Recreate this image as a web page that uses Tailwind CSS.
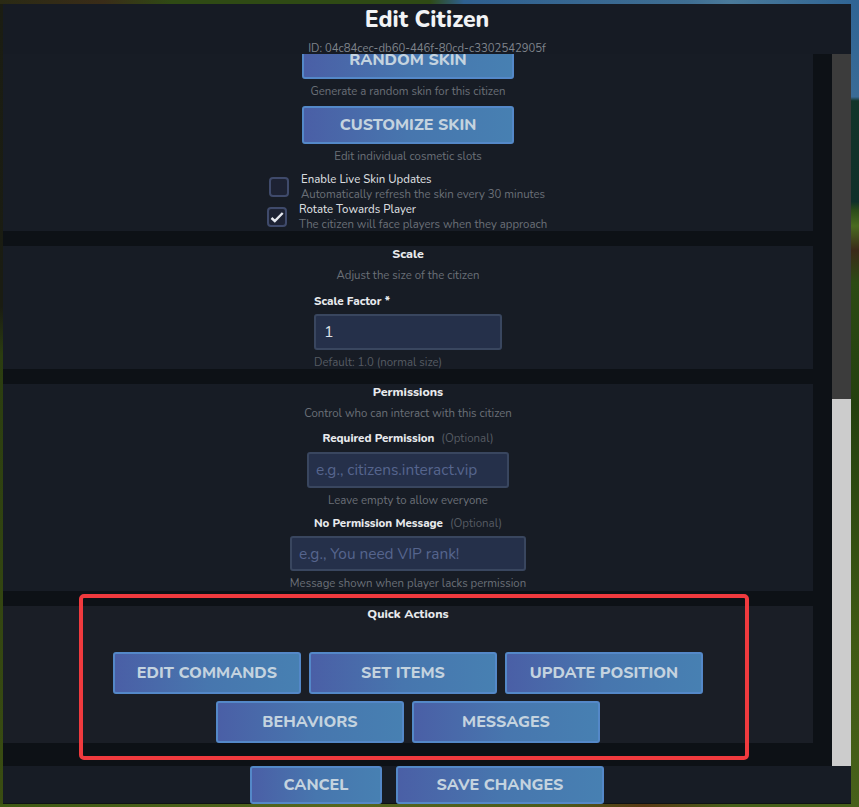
<!DOCTYPE html>
<html>
<head>
<meta charset="utf-8">
<script src="https://cdn.jsdelivr.net/npm/@tailwindcss/browser@4"></script>
</head>
<body class="m-0 overflow-hidden">
<div class="relative w-[859px] h-[807px] overflow-hidden pt-[4px] pl-[3px] font-['Nunito','Noto_Sans',sans-serif] bg-[linear-gradient(180deg,#1b1d12_0%,#1a1c12_38%,#2b3d10_44%,#3a4d12_100%)]">
  <!-- game scene behind the window -->
  <div class="absolute left-0 top-0 w-full h-[4px] bg-[linear-gradient(90deg,#2a2a14_0%,#3a2c18_12%,#2f4a14_20%,#2f4a14_50%,#2f6090_54%,#3f6e92_80%,#4a7a9a_85%,#2f6494_100%)]"></div>
  <div class="absolute right-0 top-0 w-[8px] h-full bg-[linear-gradient(180deg,#2f6494_0%,#3a6b96_12%,#12352a_12.5%,#10302a_25%,#2a4a1a_26%,#4a6a20_28%,#3a2a18_31%,#2c4a14_35%,#24400f_50%,#3f5a14_80%,#47601a_100%)]"></div>
  <div class="absolute left-0 bottom-0 w-full h-[3px] bg-[linear-gradient(90deg,#3f5a14_0%,#55661e_40%,#4a5a1a_65%,#5a3a14_75%,#47601a_85%,#47601a_100%)]"></div>

  <div class="relative w-[848px] h-[800px] flex flex-col bg-[#0d1116]">
    <!-- header -->
    <div class="h-[50px] shrink-0 bg-[#161b24] flex flex-col items-center">
      <h1 class="text-[23px] leading-[30px] font-extrabold text-[#f1f3f5] mt-[1px]">Edit Citizen</h1>
      <p class="text-[11.3px] leading-[16px] text-[#7f848c] mt-[6px]">ID: 04c84cec-db60-446f-80cd-c3302542905f</p>
    </div>
    <!-- body -->
    <div class="h-[713px] shrink-0 flex overflow-hidden">
      <div class="w-[810px] shrink-0 flex flex-col gap-[15px] mt-[-13px]">
        <section class="h-[190px] shrink-0 bg-[#171c25] flex flex-col items-center">
          <button class="w-[212px] h-[38px] shrink-0 rounded-[3px] border-2 border-[#5488c8] bg-gradient-to-r from-[#4a5fa6] via-[#4776ae] via-50% to-[#4780b2] text-[16.1px] font-extrabold text-[#c4d3df]">RANDOM SKIN</button>
          <p class="text-[11.4px] leading-[16px] text-[#6b7078] mt-[4px]">Generate a random skin for this citizen</p>
          <button class="w-[212px] h-[38px] shrink-0 rounded-[3px] border-2 border-[#5488c8] bg-gradient-to-r from-[#4a5fa6] via-[#4776ae] via-50% to-[#4780b2] text-[16.1px] font-extrabold text-[#c4d3df] mt-[7px]">CUSTOMIZE SKIN</button>
          <p class="text-[11.4px] leading-[16px] text-[#6b7078] mt-[4px]">Edit individual cosmetic slots</p>
          <div class="flex gap-[12px] items-center mt-[7px] self-start pl-[266px]">
            <div class="w-[20px] h-[20px] rounded-[4px] border-2 border-[#3f4a6b] bg-[#1d2233]"></div>
            <div class="pt-[1px]">
              <p class="text-[11.4px] leading-[15px] font-medium text-[#d8dbdf]">Enable Live Skin Updates</p>
              <p class="text-[11.4px] leading-[15px] text-[#6b7078]">Automatically refresh the skin every 30 minutes</p>
            </div>
          </div>
          <div class="flex gap-[12px] items-center self-start pl-[264px] mt-[-1px]">
            <div class="w-[20px] h-[20px] rounded-[4px] border-2 border-[#3f4a6b] bg-[#1d2233] flex items-center justify-center">
              <svg width="14" height="14" viewBox="0 0 14 14" fill="none"><path d="M1.5 8 L4.8 11 L12.7 3" stroke="#e6e9f0" stroke-width="2.4"/></svg>
            </div>
            <div class="pt-[1px]">
              <p class="text-[11.4px] leading-[15px] font-medium text-[#d8dbdf]">Rotate Towards Player</p>
              <p class="text-[11.4px] leading-[15px] text-[#6b7078]">The citizen will face players when they approach</p>
            </div>
          </div>
        </section>
        <section class="h-[123px] shrink-0 bg-[#171c25] flex flex-col items-center">
          <h2 class="text-[12.4px] leading-[16px] font-extrabold text-[#e8eaed]">Scale</h2>
          <p class="text-[11.4px] leading-[16px] text-[#6b7078] mt-[5px]">Adjust the size of the citizen</p>
          <div class="w-[188px] mt-[10px]">
            <label class="block text-[11.6px] leading-[16px] font-extrabold text-[#e8eaed]">Scale Factor *</label>
            <input value="1" class="block w-[188px] h-[36px] mt-[5px] rounded-[3px] border-2 border-[#39465f] bg-[#25304a] px-[8px] text-[16px] text-[#dde1e8]">
            <p class="text-[11.4px] leading-[16px] text-[#565b63] mt-[4px]">Default: 1.0 (normal size)</p>
          </div>
        </section>
        <section class="h-[207px] shrink-0 bg-[#171c25] flex flex-col items-center">
          <h2 class="text-[12.4px] leading-[16px] font-extrabold text-[#e8eaed]">Permissions</h2>
          <p class="text-[11.4px] leading-[16px] text-[#6b7078] mt-[5px]">Control who can interact with this citizen</p>
          <div class="text-[11.5px] leading-[16px] mt-[9px]"><span class="font-extrabold text-[#e8eaed]">Required Permission</span><span class="text-[#565b63] ml-[7px]">(Optional)</span></div>
          <input placeholder="e.g., citizens.interact.vip" class="block w-[202px] h-[36px] mt-[6px] rounded-[3px] border-2 border-[#39465f] bg-[#25304a] px-[7px] text-[15.4px] placeholder:text-[#56658e]">
          <p class="text-[11.4px] leading-[16px] text-[#6b7078] mt-[4px]">Leave empty to allow everyone</p>
          <div class="text-[11.5px] leading-[16px] mt-[7px]"><span class="font-extrabold text-[#e8eaed]">No Permission Message</span><span class="text-[#565b63] ml-[7px]">(Optional)</span></div>
          <input placeholder="e.g., You need VIP rank!" class="block w-[236px] h-[36px] mt-[5px] rounded-[3px] border-2 border-[#39465f] bg-[#25304a] px-[7px] text-[15.4px] placeholder:text-[#56658e]">
          <p class="text-[11.4px] leading-[16px] text-[#6b7078] mt-[4px]">Message shown when player lacks permission</p>
        </section>
        <section class="h-[137px] shrink-0 bg-[#1a1e26] flex flex-col items-center">
          <h2 class="text-[12.4px] leading-[16px] font-extrabold text-[#e8eaed]">Quick Actions</h2>
          <div class="flex flex-wrap justify-center gap-x-[8px] gap-y-[7px] mt-[30px] w-[620px]">
            <button class="w-[188px] h-[42px] rounded-[3px] border-2 border-[#5488c8] bg-gradient-to-r from-[#4a5fa6] via-[#4776ae] via-50% to-[#4780b2] text-[16.1px] font-extrabold text-[#c4d3df]">EDIT COMMANDS</button>
            <button class="w-[188px] h-[42px] rounded-[3px] border-2 border-[#5488c8] bg-gradient-to-r from-[#4a5fa6] via-[#4776ae] via-50% to-[#4780b2] text-[16.1px] font-extrabold text-[#c4d3df]">SET ITEMS</button>
            <button class="w-[198px] h-[42px] rounded-[3px] border-2 border-[#5488c8] bg-gradient-to-r from-[#4a5fa6] via-[#4776ae] via-50% to-[#4780b2] text-[16.1px] font-extrabold text-[#c4d3df]">UPDATE POSITION</button>
            <button class="w-[188px] h-[42px] rounded-[3px] border-2 border-[#5488c8] bg-gradient-to-r from-[#4a5fa6] via-[#4776ae] via-50% to-[#4780b2] text-[16.1px] font-extrabold text-[#c4d3df]">BEHAVIORS</button>
            <button class="w-[188px] h-[42px] rounded-[3px] border-2 border-[#5488c8] bg-gradient-to-r from-[#4a5fa6] via-[#4776ae] via-50% to-[#4780b2] text-[16.1px] font-extrabold text-[#c4d3df]">MESSAGES</button>
          </div>
        </section>
      </div>
      <div class="w-[19px] shrink-0"></div>
      <div class="w-[19px] shrink-0 flex flex-col">
        <div class="h-[345px] bg-[#3c3c3c]"></div>
        <div class="flex-1 bg-[#cccccc]"></div>
      </div>
    </div>
    <!-- footer -->
    <div class="h-[37px] shrink-0 bg-[#171c25] flex justify-center gap-[14px] mt-[-1px]">
      <button class="w-[132px] h-[38px] shrink-0 rounded-[3px] border-2 border-[#5488c8] bg-gradient-to-r from-[#4a5fa6] via-[#4776ae] via-50% to-[#4780b2] text-[16.1px] font-extrabold text-[#c4d3df]">CANCEL</button>
      <button class="w-[208px] h-[38px] shrink-0 rounded-[3px] border-2 border-[#5488c8] bg-gradient-to-r from-[#4a5fa6] via-[#4776ae] via-50% to-[#4780b2] text-[16.1px] font-extrabold text-[#c4d3df]">SAVE CHANGES</button>
    </div>
  </div>
  <!-- annotation -->
  <div class="absolute left-[79px] top-[594px] w-[670px] h-[166px] rounded-[5px] border-[4px] border-[#f03a3e]"></div>
</div>
</body>
</html>
